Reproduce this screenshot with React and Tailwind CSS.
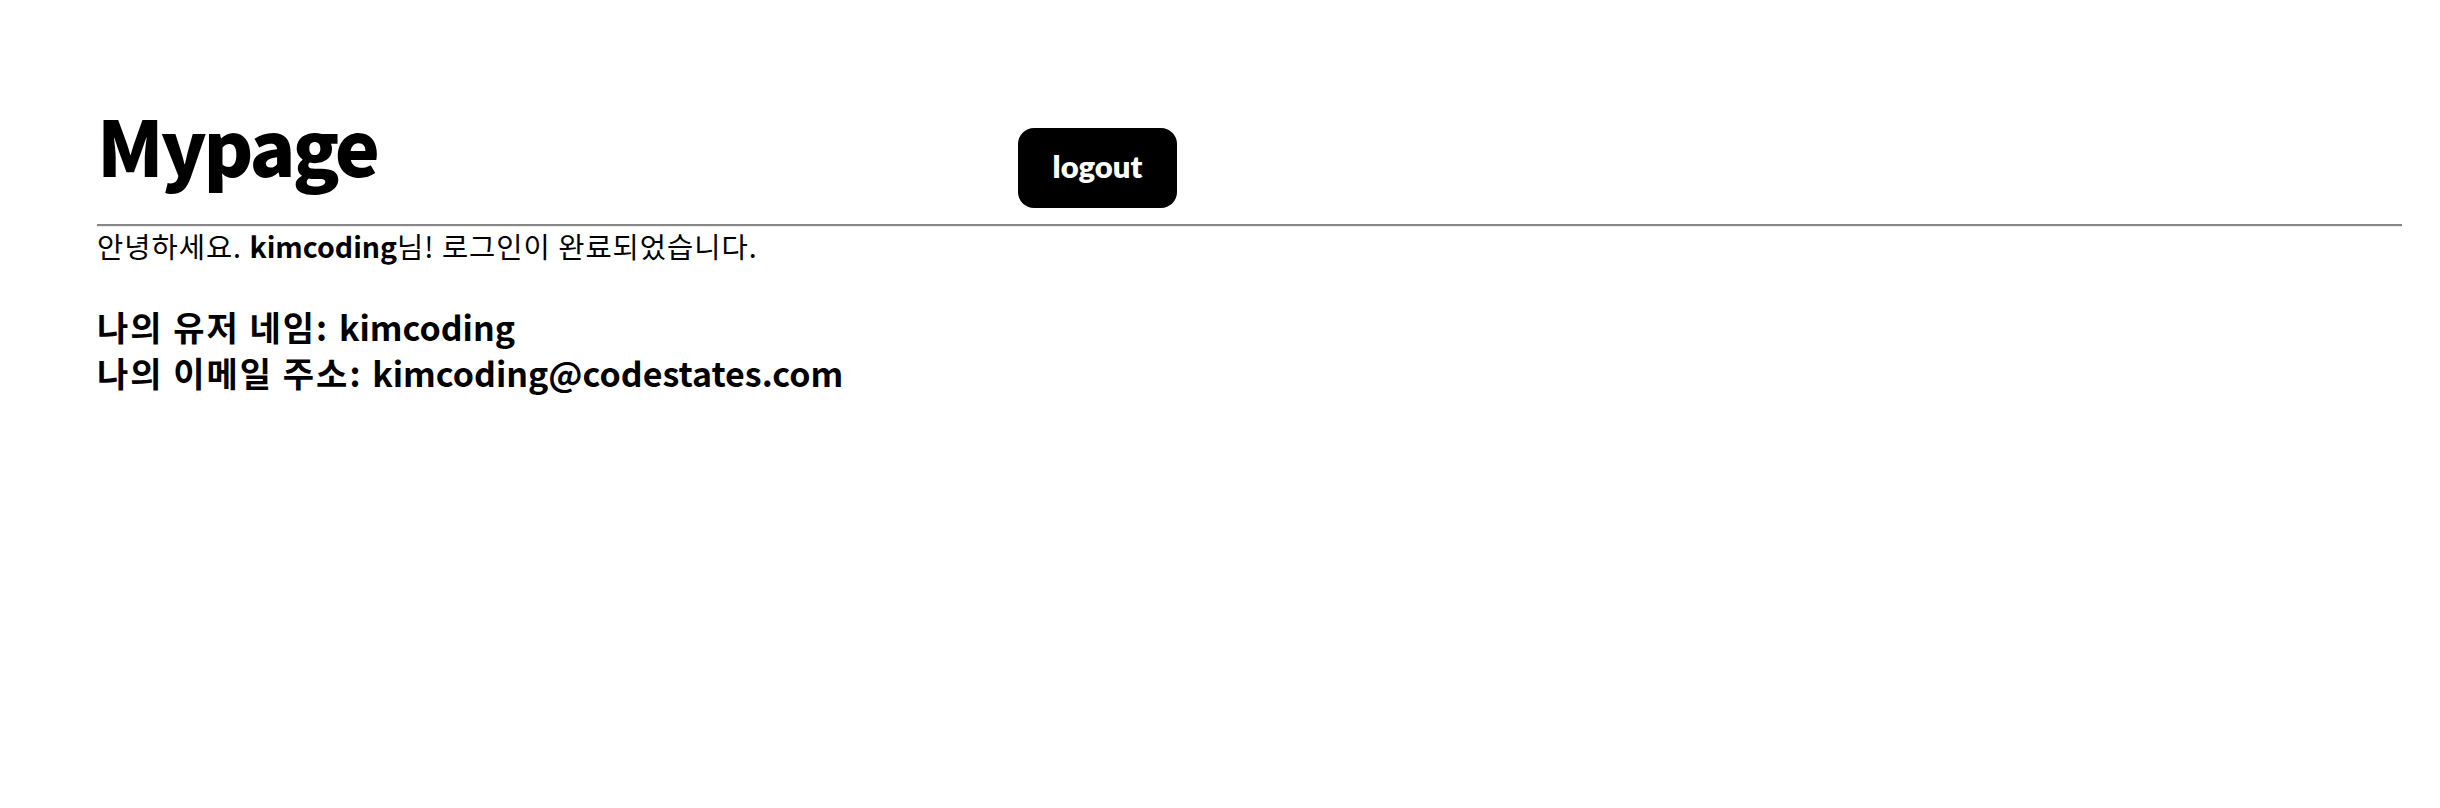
import React from 'react';

export default function App() {
  const user = { username: 'kimcoding', email: 'kimcoding@codestates.com' };

  return (
    <div className="min-h-screen bg-white pl-[97px] pr-[38px] pt-[103px] text-black font-['Noto_Sans_CJK_KR','Noto_Sans',sans-serif]">
      <div className="flex items-start">
        <h1 className="w-[921px] pt-[3px] text-[76px] font-black leading-none tracking-[-3px]">Mypage</h1>
        <button className="mt-[25px] h-[80px] w-[159px] rounded-[16px] bg-black pb-[4px] text-[31px] font-extrabold text-white font-['Lato',sans-serif]">
          logout
        </button>
      </div>
      <hr className="mt-[16px] h-0 border-0 border-t-2 border-b border-t-[#888888] border-b-[#ececec]" />
      <div className="text-[28.5px] leading-[1.3] tracking-[1px]">
        안녕하세요. <span className="font-bold tracking-normal">{user.username}</span>님! 로그인이 완료되었습니다.
      </div>
      <div className="mt-[40px] text-[34px] font-bold leading-[46px]">
        <div>
          <span className="tracking-[2px]">나의 유저 네임: </span>
          {user.username}
        </div>
        <div>
          <span className="tracking-[2px]">나의 이메일 주소: </span>
          {user.email}
        </div>
      </div>
    </div>
  );
}
